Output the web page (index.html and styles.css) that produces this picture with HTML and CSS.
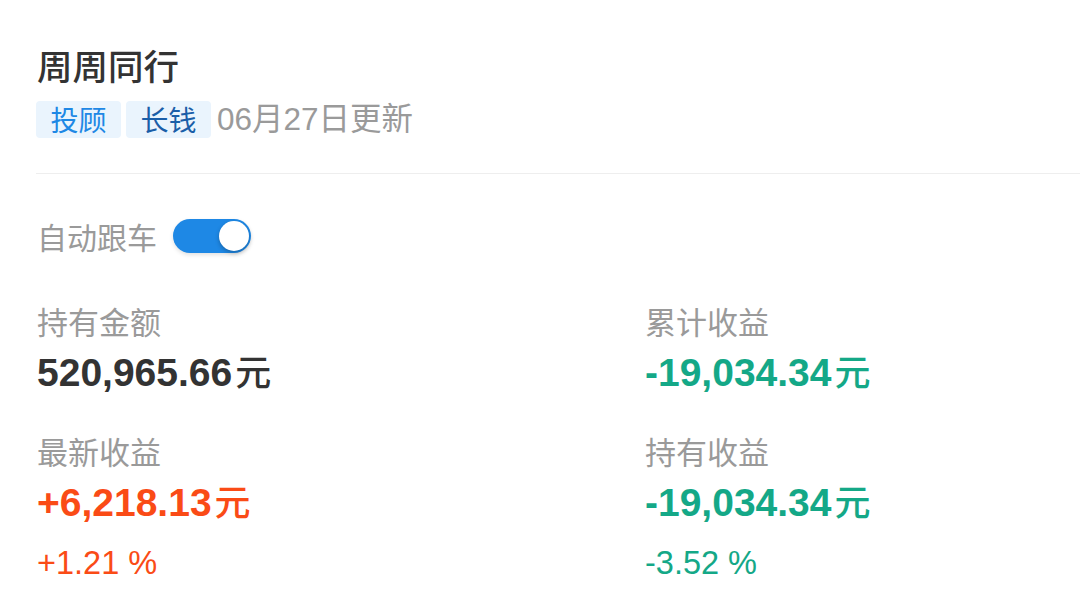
FILE: index.html
```html
<!DOCTYPE html>
<html lang="zh-CN">
<head>
<meta charset="utf-8">
<title>周周同行</title>
<link rel="stylesheet" href="styles.css">
</head>
<body>
<div class="page">
  <div class="head">
    <h1 class="title">周周同行</h1>
    <div class="meta">
      <span class="tag tag-a">投顾</span>
      <span class="tag tag-b">长钱</span>
      <span class="date">06月27日更新</span>
    </div>
  </div>
  <div class="divider"></div>
  <div class="follow">
    <span class="follow-label">自动跟车</span>
    <span class="switch"><span class="knob"></span></span>
  </div>
  <div class="stats">
    <div class="stat">
      <div class="label">持有金额</div>
      <div class="value dark">520,965.66<span class="unit">元</span></div>
    </div>
    <div class="stat">
      <div class="label">累计收益</div>
      <div class="value green">-19,034.34<span class="unit">元</span></div>
    </div>
    <div class="stat">
      <div class="label">最新收益</div>
      <div class="value red">+6,218.13<span class="unit">元</span></div>
      <div class="pct red">+1.21 %</div>
    </div>
    <div class="stat">
      <div class="label">持有收益</div>
      <div class="value green">-19,034.34<span class="unit">元</span></div>
      <div class="pct green">-3.52 %</div>
    </div>
  </div>
</div>
</body>
</html>
```

FILE: styles.css
```css
html, body {
  margin: 0;
  padding: 0;
  background: #ffffff;
}
body {
  font-family: "Liberation Sans", "Noto Sans CJK SC", sans-serif;
  color: #333333;
  width: 1080px;
  height: 605px;
  overflow: hidden;
}
.page {
  padding: 45px 0 0 36px;
}
.title {
  margin: 0;
  font-family: "Noto Sans CJK SC", sans-serif;
  font-size: 35.5px;
  line-height: 40px;
  font-weight: 500;
  color: #333333;
  padding-left: 1px;
}
.meta {
  display: flex;
  align-items: center;
  gap: 5px;
  margin-top: 16px;
  height: 37px;
}
.tag {
  display: flex;
  align-items: center;
  justify-content: center;
  width: 85px;
  height: 37px;
  border-radius: 4px;
  background: #eaf4fd;
  font-family: "Noto Sans CJK SC", sans-serif;
  font-size: 28px;
  line-height: 37px;
}
.tag-a { color: #1e88e5; }
.tag-b { color: #1a5ea8; }
.date {
  margin-left: 1px;
  font-size: 31.5px;
  line-height: 37px;
  color: #9a9a9a;
}
.divider {
  margin-top: 35px;
  height: 1px;
  background: #eeeeee;
}
.follow {
  display: flex;
  align-items: center;
  gap: 16px;
  margin-top: 45px;
  height: 34px;
  padding-left: 1px;
}
.follow-label {
  font-family: "Noto Sans CJK SC", sans-serif;
  font-size: 30px;
  line-height: 34px;
  color: #9a9a9a;
}
.switch {
  position: relative;
  width: 78px;
  height: 34px;
  border-radius: 17px;
  background: #1e88e5;
  box-shadow: 0 2px 4px rgba(0,0,0,0.12);
}
.knob {
  position: absolute;
  right: 2px;
  top: 2px;
  width: 30px;
  height: 30px;
  border-radius: 50%;
  background: #ffffff;
  box-shadow: 0 2px 4px rgba(0,0,0,0.25);
}
.stats {
  display: grid;
  grid-template-columns: 608px 1fr;
  row-gap: 35px;
  margin-top: 48px;
  padding-left: 1px;
}
.label {
  font-family: "Noto Sans CJK SC", sans-serif;
  font-size: 31px;
  line-height: 40px;
  color: #9a9a9a;
}
.value {
  margin-top: 9px;
  height: 46px;
  font-size: 39px;
  line-height: 46px;
  font-weight: 700;
  white-space: nowrap;
}
.unit {
  font-family: "Noto Sans CJK SC", sans-serif;
  font-weight: 500;
  font-size: 36px;
  line-height: 1;
  margin-left: 3px;
}
.pct {
  margin-top: 17px;
  font-size: 32.5px;
  line-height: 40px;
}
.dark { color: #333333; }
.red { color: #fa4b16; }
.green { color: #14a887; }
```
